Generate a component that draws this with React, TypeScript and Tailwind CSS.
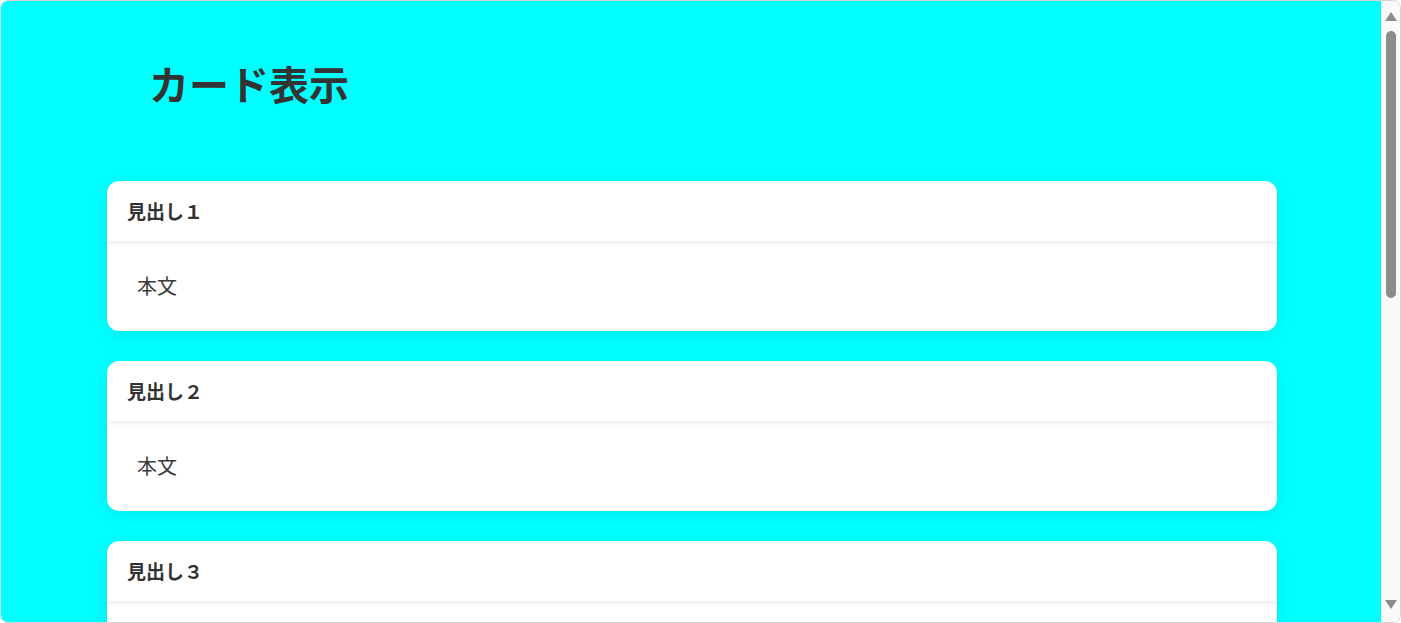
const cards = [
  { title: "見出し１", body: "本文" },
  { title: "見出し２", body: "本文" },
  { title: "見出し３", body: "本文" },
  { title: "見出し４", body: "本文" },
];

function ScrollBar() {
  return (
    <div className="flex w-[19px] shrink-0 flex-col items-center bg-[#fafafa] pt-[11px] pb-[13px]">
      <svg width="12" height="9" viewBox="0 0 12 9" className="block">
        <path d="M6 0 L12 9 L0 9 Z" fill="#8c8c8c" />
      </svg>
      <div className="mt-[10px] h-[267px] w-[10px] rounded-full bg-[#8c8c8c]" />
      <div className="flex-1" />
      <svg width="12" height="9" viewBox="0 0 12 9" className="block">
        <path d="M0 0 L12 0 L6 9 Z" fill="#8c8c8c" />
      </svg>
    </div>
  );
}

export default function App() {
  return (
    <div
      className="flex h-screen w-full overflow-hidden rounded-lg border border-[#d4d4d4] bg-white text-[#333]"
      style={{ fontFamily: '"Noto Sans CJK JP", "Noto Sans", sans-serif' }}
    >
      <main className="h-full flex-1 overflow-hidden bg-[#00ffff] pl-[2px]">
        <div className="mx-auto w-[1170px] pb-10">
          <h1 className="pl-[42px] pt-[58px] text-[40px] font-bold leading-[48px]">カード表示</h1>

          <div className="mt-[74px] flex flex-col gap-[30px]">
            {cards.map((c) => (
              <section
                key={c.title}
                className="overflow-hidden rounded-xl bg-white shadow-[0_5px_16px_rgba(0,0,0,0.08)]"
              >
                <div className="relative flex h-[60px] items-center px-5 text-[19px] font-bold shadow-[0_2px_5px_rgba(0,0,0,0.08)]">
                  {c.title}
                </div>
                <div className="flex h-[90px] items-center px-[30px] text-[20px] text-[#3a3a3a]">{c.body}</div>
              </section>
            ))}
          </div>
        </div>
      </main>
      <ScrollBar />
    </div>
  );
}
